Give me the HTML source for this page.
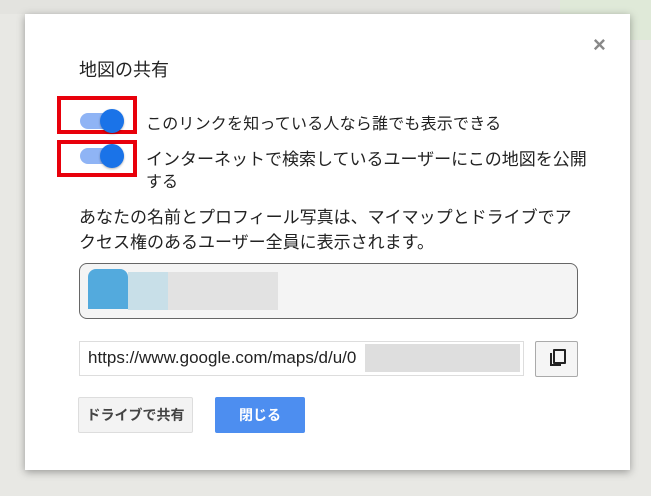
<!DOCTYPE html>
<html><head><meta charset="utf-8"><style>
body{margin:0;width:651px;height:496px;overflow:hidden;background:#e8e8e4;font-family:"Liberation Sans","Noto Sans CJK JP",sans-serif;position:relative}
.bgblk{position:absolute}
.dlg{position:absolute;left:25px;top:14px;width:605px;height:456px;background:#fff;box-shadow:0 2px 8px rgba(0,0,0,.35)}
.a{position:absolute;white-space:nowrap;color:#222}
.red{position:absolute;border:4px solid #e8000b;box-sizing:border-box}
.track{position:absolute;width:44px;height:16px;border-radius:8px;background:#8fb4f5}
.knob{position:absolute;width:24px;height:24px;border-radius:50%;background:#1a73e8;box-shadow:0 1px 2px rgba(0,0,0,.3)}
</style></head><body>
<div class="bgblk" style="left:0;top:0;width:651px;height:14px;background:#e3e3df"></div>
<div class="bgblk" style="left:560px;top:0;width:91px;height:40px;background:#dfe9d8"></div>
<div class="dlg">
<div class="a" style="left:54px;top:42px;font-size:18px">地図の共有</div>
<div class="a" style="left:568px;top:18px;font-size:22px;color:#888;font-weight:bold">×</div>
<div class="red" style="left:32px;top:82px;width:80px;height:38px"></div>
<div class="track" style="left:55px;top:99px"></div>
<div class="knob" style="left:75px;top:95px"></div>
<div class="a" style="left:121px;top:96px;font-size:16px;letter-spacing:0.2px">このリンクを知っている人なら誰でも表示できる</div>
<div class="red" style="left:32px;top:126px;width:80px;height:37px"></div>
<div class="track" style="left:55px;top:134px"></div>
<div class="knob" style="left:75px;top:130px"></div>
<div class="a" style="left:121px;top:131px;font-size:17px">インターネットで検索しているユーザーにこの地図を公開</div>
<div class="a" style="left:121px;top:154px;font-size:16px">する</div>
<div class="a" style="left:54px;top:189px;font-size:17px">あなたの名前とプロフィール写真は、マイマップとドライブでア</div>
<div class="a" style="left:54px;top:214px;font-size:17px">クセス権のあるユーザー全員に表示されます。</div>
<div class="a" style="left:54px;top:249px;width:499px;height:56px;box-sizing:border-box;border:1px solid #666;border-radius:8px;background:#f4f4f4"></div>
<div class="a" style="left:63px;top:255px;width:40px;height:40px;background:#53aadd;border-radius:8px 8px 0 0"></div>
<div class="a" style="left:103px;top:258px;width:40px;height:38px;background:#c8dfe8"></div>
<div class="a" style="left:143px;top:258px;width:110px;height:38px;background:#e2e2e2"></div>
<div class="a" style="left:54px;top:327px;width:445px;height:35px;box-sizing:border-box;border:1px solid #ddd;background:#fff"></div>
<div class="a" style="left:63px;top:334px;font-size:17px">https://www.google.com/maps/d/u/0</div>
<div class="a" style="left:340px;top:330px;width:155px;height:28px;background:#dedede"></div>
<div class="a" style="left:510px;top:327px;width:43px;height:36px;box-sizing:border-box;border:1px solid #aaa;border-radius:2px;background:#f5f5f5"></div>
<div class="a" style="left:525px;top:339px;width:9px;height:11px;border:2px solid #222;border-top:none;border-right:none"></div>
<div class="a" style="left:528px;top:335px;width:9px;height:11px;border:2px solid #222;border-radius:1px"></div>
<div class="a" style="left:53px;top:383px;width:115px;height:36px;box-sizing:border-box;border:1px solid #ddd;border-radius:2px;background:#f3f3f3;font-size:14px;line-height:34px;text-align:center;color:#444;font-weight:bold">ドライブで共有</div>
<div class="a" style="left:190px;top:383px;width:90px;height:36px;border-radius:2px;background:#4d8ef0;font-size:14px;line-height:36px;text-align:center;color:#fff;font-weight:bold">閉じる</div>
</div>
</body></html>
